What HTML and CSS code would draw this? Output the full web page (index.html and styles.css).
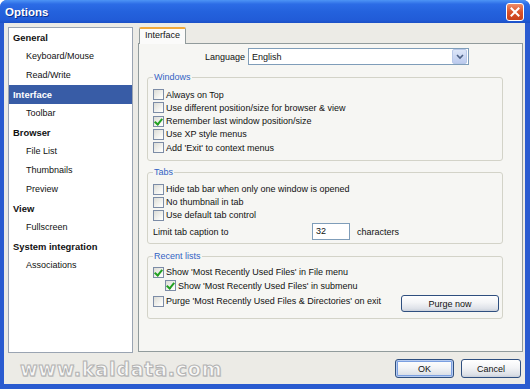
FILE: index.html
```html
<!DOCTYPE html>
<html lang="en">
<head>
    <meta charset="UTF-8">
    <title>Options</title>
    <link rel="stylesheet" href="styles.css">
</head>
<body>
    <div class="window">
        <div class="titlebar">
            <span class="title">Options</span>
            <span class="close">
                <svg width="16" height="16" viewBox="0 0 16 16"><path d="M4.5 4.5 L11.5 11.5 M11.5 4.5 L4.5 11.5" stroke="#fff" stroke-width="2" stroke-linecap="square"/></svg>
            </span>
        </div>
        <div class="client">
            <div class="main">
                <ul class="tree">
                    <li class="head">General</li>
                    <li class="child">Keyboard/Mouse</li>
                    <li class="child">Read/Write</li>
                    <li class="head selected">Interface</li>
                    <li class="child">Toolbar</li>
                    <li class="head">Browser</li>
                    <li class="child">File List</li>
                    <li class="child">Thumbnails</li>
                    <li class="child">Preview</li>
                    <li class="head">View</li>
                    <li class="child">Fullscreen</li>
                    <li class="head">System integration</li>
                    <li class="child">Associations</li>
                </ul>
                <div class="tabs">
                    <div class="tabstrip"><span class="tab">Interface</span></div>
                    <div class="page">
                        <div class="lang-row">
                            <span class="label">Language</span>
                            <div class="select">
                                <span>English</span>
                                <span class="arrow"><svg width="8" height="6" viewBox="0 0 8 6"><path d="M1 1 L4 4 L7 1" fill="none" stroke="#4d6185" stroke-width="1.6"/></svg></span>
                            </div>
                        </div>

                        <fieldset class="group windows">
                            <legend>Windows</legend>
                            <div class="opt"><span class="check"></span>Always on Top</div>
                            <div class="opt"><span class="check"></span>Use different position/size for browser &amp; view</div>
                            <div class="opt"><span class="check on"></span>Remember last window position/size</div>
                            <div class="opt"><span class="check"></span>Use XP style menus</div>
                            <div class="opt"><span class="check"></span>Add 'Exit' to context menus</div>
                        </fieldset>

                        <fieldset class="group tabs-group">
                            <legend>Tabs</legend>
                            <div class="opt"><span class="check"></span>Hide tab bar when only one window is opened</div>
                            <div class="opt"><span class="check"></span>No thumbnail in tab</div>
                            <div class="opt"><span class="check"></span>Use default tab control</div>
                            <div class="limit-row">
                                <span class="limit-label">Limit tab caption to</span>
                                <span class="input">32</span>
                                <span>characters</span>
                            </div>
                        </fieldset>

                        <fieldset class="group recent">
                            <legend>Recent lists</legend>
                            <div class="opt"><span class="check on"></span>Show 'Most Recently Used Files' in File menu</div>
                            <div class="opt sub"><span class="check on"></span>Show 'Most Recently Used Files' in submenu</div>
                            <div class="purge-row">
                                <div class="opt"><span class="check"></span>Purge 'Most Recently Used Files &amp; Directories' on exit</div>
                                <button class="btn purge">Purge now</button>
                            </div>
                        </fieldset>
                    </div>
                </div>
            </div>
            <div class="footer">
                <span class="watermark">www.kaldata.com</span>
                <div class="buttons">
                    <button class="btn default">OK</button>
                    <button class="btn">Cancel</button>
                </div>
            </div>
        </div>
    </div>
</body>
</html>
```

FILE: styles.css
```css
body {
    margin: 0;
    background: #fff;
    font-family: "Liberation Sans", Arial, sans-serif;
    font-size: 9px;
    color: #111;
}

.window {
    width: 530px;
    height: 389px;
    display: flex;
    flex-direction: column;
    background: #2a5bd0;
    border-radius: 7px 7px 0 0;
    overflow: hidden;
}

.titlebar {
    height: 23px;
    display: flex;
    align-items: center;
    justify-content: space-between;
    padding: 0 6px 0 5px;
    background: linear-gradient(to bottom, #4d94f5 0%, #2c6ce6 18%, #2462dd 50%, #215cd8 85%, #1b50c6 100%);
}

    .titlebar .title {
        color: #fff;
        font-weight: bold;
        font-size: 11.5px;
        text-shadow: 1px 1px 0 #0d2f8c;
    }

.close {
    width: 16px;
    height: 16px;
    margin-top: 1px;
    border: 1px solid #fff;
    border-radius: 3px;
    background: linear-gradient(to bottom, #ee8d6a, #d9522a 50%, #c8401a);
    display: flex;
}

.client {
    flex: 1;
    margin: 0 5px 5px 4px;
    background: #ecebe6;
    display: flex;
    flex-direction: column;
}

.main {
    display: flex;
    padding: 4px 2px 0 4px;
}

.tree {
    width: 125px;
    height: 326px;
    box-sizing: border-box;
    margin: 0;
    padding: 0;
    list-style: none;
    background: #fff;
    border: 1px solid #9aa4b2;
}

    .tree li {
        height: 19px;
        line-height: 19px;
        white-space: nowrap;
    }

    .tree .head {
        font-weight: bold;
        font-size: 9.4px;
        padding-left: 4px;
    }

    .tree .child {
        padding-left: 17px;
    }

    .tree .selected {
        background: #385ca6;
        color: #fff;
    }

.tabs {
    width: 385px;
    margin-left: 5px;
    display: flex;
    flex-direction: column;
}

.tabstrip {
    height: 16px;
    display: flex;
}

.tab {
    position: relative;
    z-index: 1;
    margin-left: 1px;
    width: 47px;
    height: 17px;
    box-sizing: border-box;
    padding-left: 5px;
    line-height: 13px;
    background: #fbfbfa;
    border: 1px solid #919b9c;
    border-top: 2px solid #f2a93a;
    border-bottom: none;
    border-radius: 2px 2px 0 0;
}

.page {
    height: 309px;
    box-sizing: border-box;
    border: 1px solid #919b9c;
    background: #f6f6f3;
    padding: 4px 19px 0 8px;
}

.lang-row {
    display: flex;
    align-items: center;
    justify-content: flex-end;
    padding-right: 34px;
}

    .lang-row .label {
        margin-right: 3px;
    }

.select {
    width: 221px;
    height: 17px;
    box-sizing: border-box;
    border: 1px solid #7f9db9;
    background: #fff;
    display: flex;
    align-items: center;
    justify-content: space-between;
    padding-left: 3px;
}

    .select .arrow {
        width: 13px;
        height: 13px;
        margin-right: 1px;
        border-radius: 2px;
        border: 1px solid #b8c8e8;
        background: linear-gradient(to bottom, #dde6f8, #bccbee);
        display: flex;
        align-items: center;
        justify-content: center;
    }

.group {
    margin: 7px 0 0 0;
    border: 1px solid #d3d3c8;
    border-radius: 3px;
    padding: 5px 3px 6px 5px;
    min-width: 0;
}

    .group legend {
        padding: 0 1px;
        line-height: 11px;
        color: #3363c4;
    }

.opt {
    height: 13.25px;
    display: flex;
    align-items: center;
    white-space: nowrap;
}

    .opt.sub {
        padding-left: 12px;
    }

.check {
    width: 11px;
    height: 11px;
    box-sizing: border-box;
    margin-right: 2px;
    border: 1px solid #7c8ca6;
    background: linear-gradient(135deg, #dcdcd6, #f7f7f4 70%, #fff);
    display: inline-block;
    position: relative;
}

    .check.on::after {
        content: "";
        position: absolute;
        left: 2px;
        top: 0px;
        width: 3px;
        height: 6px;
        border: solid #22a022;
        border-width: 0 2px 2px 0;
        transform: rotate(40deg);
    }

.tabs-group {
    margin-top: 5.5px;
    padding: 5px 3px 3px 5px;
}

    .tabs-group .opt {
        height: 13px;
    }

.limit-row {
    height: 17px;
    margin-top: 1.5px;
    display: flex;
    align-items: center;
}

.limit-label {
    width: 159px;
}

.input {
    width: 38px;
    height: 17px;
    box-sizing: border-box;
    border: 1px solid #7f9db9;
    background: #fff;
    padding-left: 3px;
    line-height: 15px;
    margin-right: 7px;
}

.recent {
    margin-top: 6.5px;
    padding: 4px 3px 6px 5px;
}

.purge-row {
    margin-top: 2.5px;
    display: flex;
    justify-content: space-between;
    align-items: flex-start;
}

.btn {
    font-family: "Liberation Sans", Arial, sans-serif;
    font-size: 9px;
    color: #111;
    height: 19px;
    padding: 0;
    border: 1px solid #2f4f7f;
    border-radius: 3px;
    background: linear-gradient(to bottom, #ffffff, #f3f4f6 45%, #dde1e8 85%, #c9cfda);
}

.purge {
    width: 98px;
    height: 17px;
    margin-top: 0.5px;
}

.footer {
    flex: 1;
    display: flex;
    align-items: center;
    justify-content: space-between;
    padding: 0 4px 0 16px;
}

.watermark {
    font-family: "DejaVu Sans", sans-serif;
    font-weight: bold;
    font-size: 19px;
    letter-spacing: 0.8px;
    color: #f8f8f7;
    -webkit-text-stroke: 1px #b2b2b2;
    text-shadow: 1px 1px 0 #d4d4d0;
}

.buttons {
    display: flex;
    gap: 7px;
}

    .buttons .btn {
        width: 60px;
    }

    .buttons .default {
        width: 59px;
        box-shadow: inset 0 0 0 1px #b6cbf0, inset 0 0 0 2px #7b9fe0;
    }
```
